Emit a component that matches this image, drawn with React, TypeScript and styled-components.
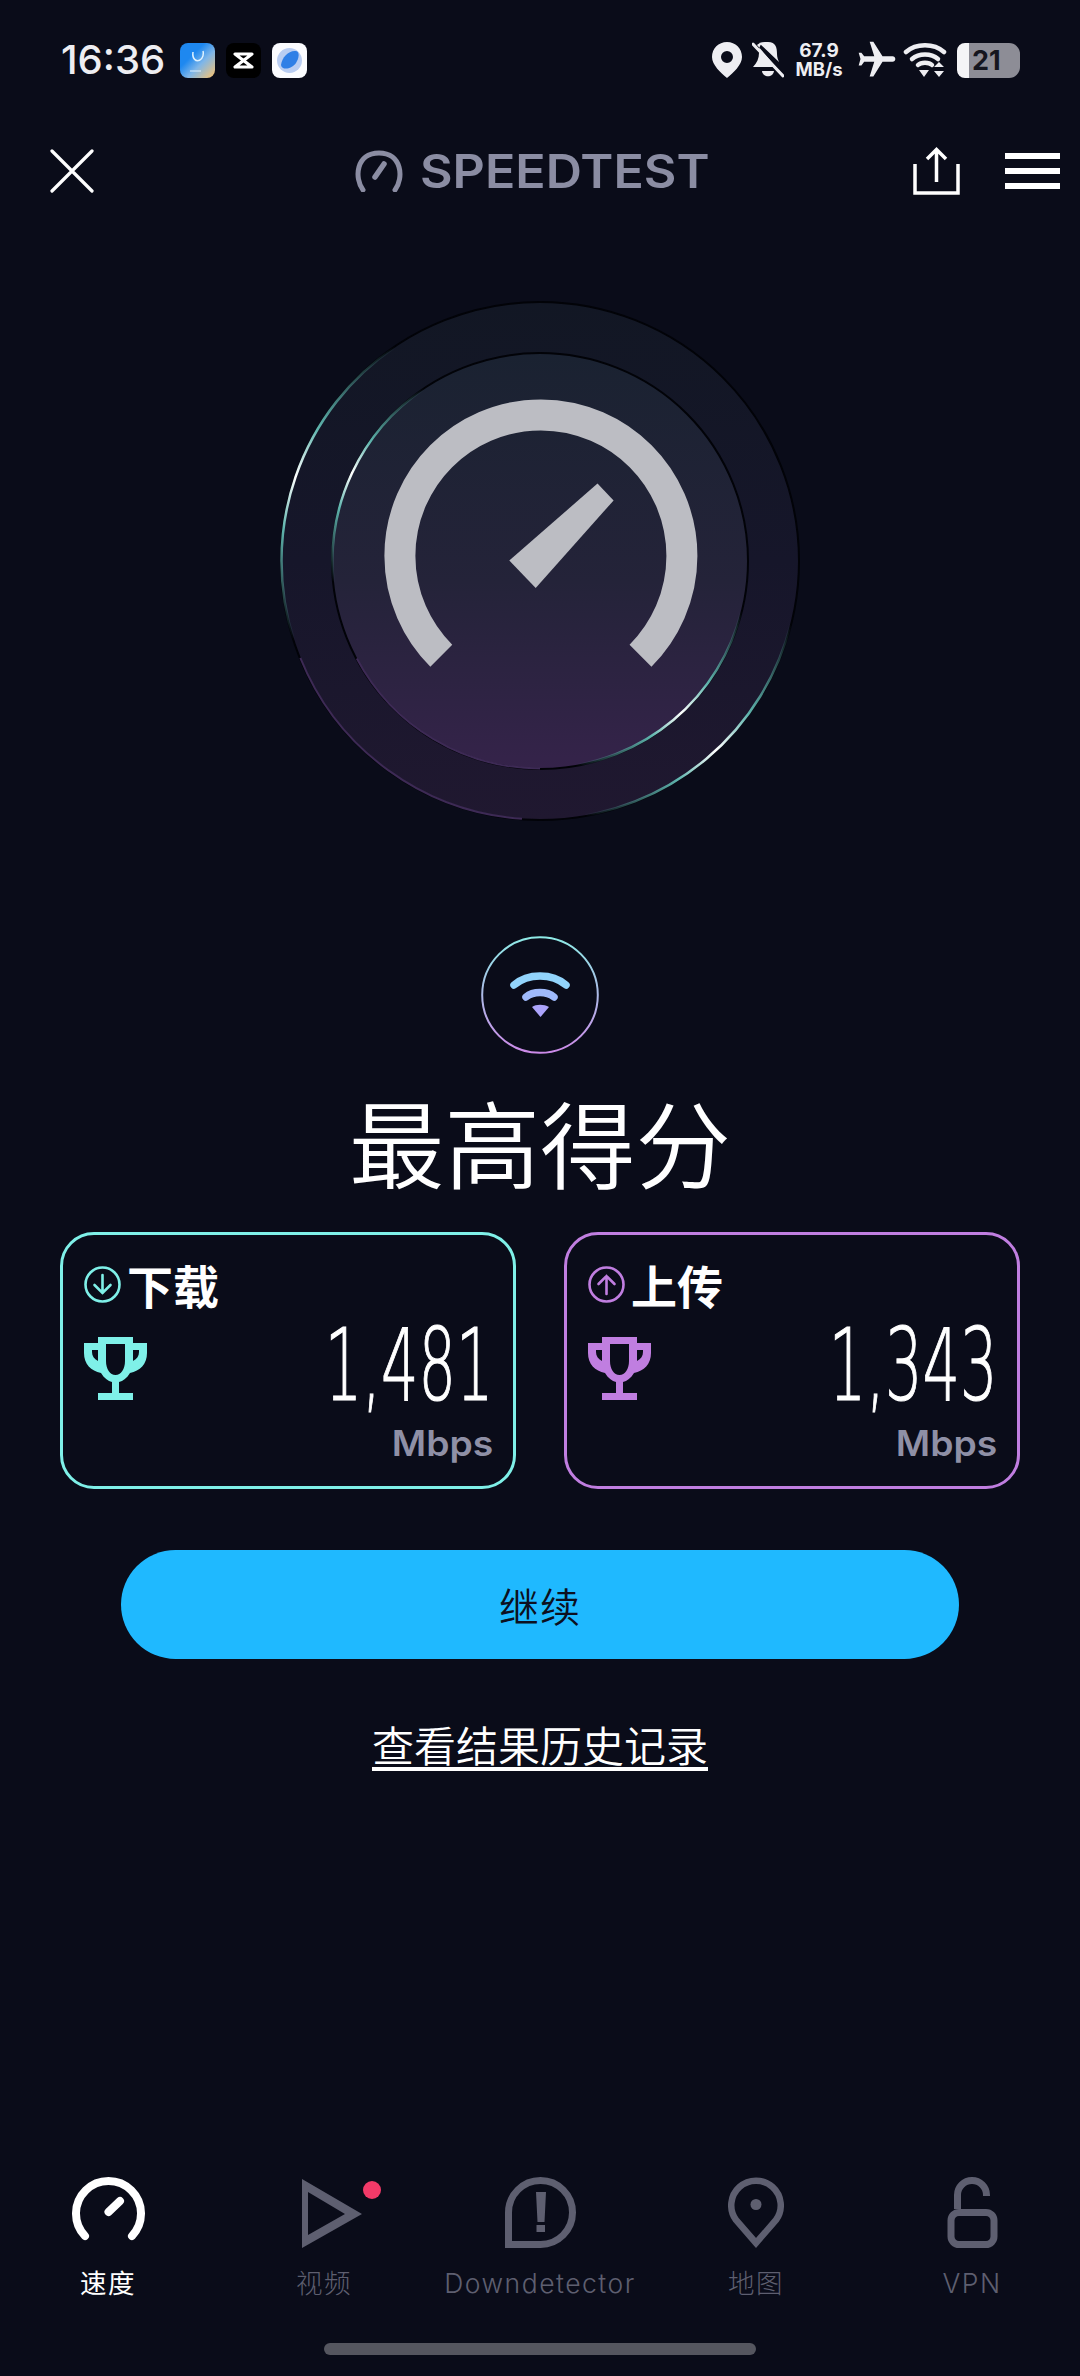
import React from 'react';
import styled, { createGlobalStyle } from 'styled-components';
import { MdFlight } from 'react-icons/md';

const CJK = `'Noto Sans CJK SC', sans-serif`;
const LATIN = `Inter, 'Noto Sans CJK SC', sans-serif`;
const TEAL = '#7ff0e8';
const PURPLE = '#c07ee0';
const MUTED = '#5e5f70';

const GlobalStyle = createGlobalStyle`
  html, body {
    margin: 0;
    padding: 0;
    background: #0a0c19;
  }
`;

const Page = styled.main`
  width: 1080px;
  height: 2376px;
  background: #0a0c19;
  display: flex;
  flex-direction: column;
  overflow: hidden;
  font-family: ${CJK};
  color: #fff;
`;

const StatusBar = styled.div`
  display: flex;
  align-items: center;
  height: 36px;
  margin-top: 42px;
  padding: 0 60px 0 61px;
`;

const Clock = styled.span`
  font-family: ${LATIN};
  font-size: 40px;
  font-weight: 500;
  line-height: 36px;
  color: #eeeef2;
  width: 119px;
`;

const AppIcon = styled.div<{ $bg: string }>`
  width: 35px;
  height: 35px;
  border-radius: 8px;
  background: ${(p) => p.$bg};
  margin-right: 11px;
  overflow: hidden;
  svg {
    display: block;
  }
`;

const StatusIcons = styled.div`
  display: flex;
  align-items: center;
  gap: 10px;
  margin-left: auto;
  color: #eeeef2;
`;

const NetSpeed = styled.div`
  display: flex;
  flex-direction: column;
  align-items: center;
  width: 50px;
  margin: 0 3px 0 0;
  font-family: ${LATIN};
  font-weight: 700;
  color: #eeeef2;
  span:first-child {
    font-size: 19px;
    line-height: 18px;
  }
  span:last-child {
    font-size: 18.5px;
    line-height: 18px;
  }
`;

const FlightIcon = styled(MdFlight)`
  transform: rotate(90deg);
  margin: 0 -6px 0 -2px;
`;

const Battery = styled.div`
  box-sizing: border-box;
  width: 63px;
  height: 35px;
  border-radius: 8px 11px 11px 8px;
  padding-left: 15px;
  background: linear-gradient(90deg, #f4f4f6 0 12px, #8d8d96 12px);
  color: #15161f;
  font-family: ${LATIN};
  font-size: 27px;
  font-weight: 700;
  line-height: 35px;
`;

const Header = styled.header`
  display: flex;
  align-items: center;
  height: 48px;
  margin-top: 69px;
  padding: 0 20px 0 50px;
`;

const Logo = styled.div`
  display: flex;
  align-items: center;
  gap: 17px;
  margin-left: 261px;
`;

const LogoText = styled.span`
  display: inline-block;
  font-family: ${LATIN};
  font-size: 46px;
  font-weight: 600;
  line-height: 48px;
  color: #8b8da3;
  transform: scaleX(1.09);
  transform-origin: left center;
`;

const HeaderActions = styled.div`
  display: flex;
  align-items: center;
  gap: 45px;
  margin-left: auto;
`;

const MenuButton = styled.div`
  width: 55px;
  display: flex;
  flex-direction: column;
  gap: 9px;
  span {
    display: block;
    height: 6px;
    background: #fff;
  }
`;

const Dial = styled.div`
  display: flex;
  justify-content: center;
  margin-top: 85px;
  svg {
    display: block;
  }
`;

const Result = styled.section`
  display: flex;
  flex-direction: column;
  align-items: center;
  margin-top: 96px;
`;

const Title = styled.h1`
  margin: 35px 0 0;
  font-family: ${CJK};
  font-size: 95.5px;
  font-weight: 350;
  line-height: 104px;
`;

const Cards = styled.div`
  display: flex;
  gap: 48px;
  margin-top: 39px;
`;

const Card = styled.div<{ $accent: string }>`
  box-sizing: border-box;
  width: 456px;
  height: 257px;
  padding: 26px 20px 0 21px;
  border: 3px solid ${(p) => p.$accent};
  border-radius: 34px;
  color: ${(p) => p.$accent};
`;

const CardHead = styled.div`
  display: flex;
  align-items: center;
  gap: 6px;
  height: 46px;
`;

const CardLabel = styled.span`
  font-size: 46px;
  font-weight: 700;
  line-height: 46px;
  color: #fff;
`;

const CardBody = styled.div`
  display: flex;
  justify-content: space-between;
  margin-top: 20px;
`;

const TrophyIcon = styled.svg`
  margin-top: 10px;
  display: block;
`;

const ValueColumn = styled.div`
  display: flex;
  flex-direction: column;
  align-items: flex-end;
`;

const Value = styled.span`
  display: inline-block;
  font-family: 'DejaVu Sans', sans-serif;
  font-size: 99px;
  font-weight: 200;
  line-height: 78px;
  color: #fff;
  -webkit-text-stroke: 1.2px #fff;
  transform: scaleX(0.595);
  transform-origin: right center;
`;

const Unit = styled.span`
  display: inline-block;
  font-family: ${LATIN};
  font-size: 35px;
  font-weight: 600;
  line-height: 40px;
  margin-top: 18px;
  color: #8f90a6;
  transform: scaleX(1.065);
  transform-origin: right center;
`;

const ContinueButton = styled.button`
  display: block;
  width: 838px;
  height: 109px;
  margin: 61px auto 0;
  border: 0;
  border-radius: 55px;
  background: #1fb9ff;
  color: #0c1020;
  font-family: ${CJK};
  font-size: 40px;
  font-weight: 350;
  letter-spacing: 1px;
`;

const HistoryLink = styled.a`
  align-self: center;
  margin-top: 58px;
  font-size: 42px;
  font-weight: 350;
  line-height: 54px;
  color: #fff;
  text-decoration: underline;
  text-underline-offset: 5px;
`;

const TabBar = styled.nav`
  display: grid;
  grid-template-columns: repeat(5, 216px);
  margin-top: auto;
`;

const Tab = styled.div<{ $active?: boolean }>`
  display: flex;
  flex-direction: column;
  align-items: center;
  color: ${(p) => (p.$active ? '#fff' : MUTED)};
  font-family: ${LATIN};
  font-size: 26.5px;
  letter-spacing: 1.5px;
  font-weight: ${(p) => (p.$active ? 400 : 300)};
`;

const TabIcon = styled.div<{ $shift?: number }>`
  position: relative;
  height: 72px;
  margin-bottom: 16px;
  padding-left: ${(p) => p.$shift || 0}px;
  svg {
    display: block;
  }
`;

const Badge = styled.span`
  position: absolute;
  top: 4px;
  right: -19px;
  width: 18px;
  height: 18px;
  border-radius: 50%;
  background: #f23a68;
`;

const TabLabel = styled.span`
  line-height: 36px;
  white-space: nowrap;
`;

const HomeBar = styled.div`
  width: 432px;
  height: 12px;
  margin: 42px auto 21px;
  border-radius: 6px;
  background: #55565f;
`;

// point on a circle, angle in degrees clockwise from 12 o'clock
const polar = (r: number, deg: number, cx = 280, cy = 281) => {
  const a = (deg * Math.PI) / 180;
  return { x: cx + r * Math.sin(a), y: cy - r * Math.cos(a) };
};

const arc = (r: number, from: number, to: number) => {
  const a = polar(r, from);
  const b = polar(r, to);
  return `M${a.x} ${a.y}A${r} ${r} 0 ${to - from > 180 ? 1 : 0} 1 ${b.x} ${b.y}`;
};

const RimGradient: React.FC<{ id: string; r: number; from: number; to: number }> = ({ id, r, from, to }) => {
  const a = polar(r, from);
  const b = polar(r, to);
  const color = '#5fb5ae';
  return (
    <linearGradient id={id} gradientUnits="userSpaceOnUse" x1={a.x} y1={a.y} x2={b.x} y2={b.y}>
      <stop offset="0" stopColor={color} stopOpacity="0" />
      <stop offset="0.33" stopColor={color} />
      <stop offset="0.5" stopColor="#ffffff" />
      <stop offset="0.67" stopColor={color} />
      <stop offset="1" stopColor={color} stopOpacity="0" />
    </linearGradient>
  );
};

const SpeedDial = () => (
  <svg width="560" height="560" viewBox="0 0 560 560">
    <defs>
      <linearGradient id="ringFill" x1="0" y1="0" x2="0" y2="1">
        <stop offset="0" stopColor="#121724" />
        <stop offset="0.5" stopColor="#16162a" />
        <stop offset="1" stopColor="#201830" />
      </linearGradient>
      <linearGradient id="faceFill" x1="0" y1="0" x2="0" y2="1">
        <stop offset="0" stopColor="#1a2231" />
        <stop offset="0.55" stopColor="#242339" />
        <stop offset="1" stopColor="#35234a" />
      </linearGradient>
      <RimGradient id="outerA" r={258} from={252} to={326} />
      <RimGradient id="outerB" r={258} from={104} to={170} />
      <RimGradient id="innerA" r={207} from={264} to={326} />
      <RimGradient id="innerB" r={207} from={104} to={170} />
    </defs>
    <circle cx="280" cy="281" r="259" fill="url(#ringFill)" stroke="#020308" strokeWidth="2" />
    <circle cx="280" cy="281" r="208" fill="url(#faceFill)" stroke="#020308" strokeWidth="2" />
    <path d={arc(258.5, 184, 248)} fill="none" stroke="#3d2a55" strokeWidth="2" />
    <path d={arc(207.5, 180, 242)} fill="none" stroke="#3d2a55" strokeWidth="2" />
    <path d={arc(258.5, 252, 326)} fill="none" stroke="url(#outerA)" strokeWidth="2.5" />
    <path d={arc(258.5, 104, 176)} fill="none" stroke="url(#outerB)" strokeWidth="2.5" />
    <path d={arc(207.5, 264, 326)} fill="none" stroke="url(#innerA)" strokeWidth="2.5" />
    <path d={arc(207.5, 104, 176)} fill="none" stroke="url(#innerB)" strokeWidth="2.5" />
    <path d="M181.3 375.7A141 141 0 1 1 380.5 375.7" fill="none" stroke="#bcbdc3" strokeWidth="31" />
    <polygon points="337.5,203.6 353.6,220.4 275.7,307.9 249.3,280.4" fill="#bcbdc3" />
  </svg>
);

const WifiBadge = () => (
  <svg width="118" height="118" viewBox="0 0 118 118">
    <defs>
      <linearGradient id="badgeRing" x1="0" y1="0" x2="0" y2="1">
        <stop offset="0" stopColor="#8eeae6" />
        <stop offset="1" stopColor="#cc8ae8" />
      </linearGradient>
    </defs>
    <circle cx="59" cy="59" r="57.8" fill="none" stroke="url(#badgeRing)" strokeWidth="2" />
    <g fill="none" strokeWidth="7.5" strokeLinecap="round">
      <path d="M33 49C47 37 71 37 85 49" stroke="#92d4fb" />
      <path d="M45 61C52 55 66 55 73 61" stroke="#9fbafb" />
    </g>
    <path d="M51 71C55 68 63 68 68 71L59.500 81Z" fill="#aca4fb" />
  </svg>
);

const Trophy = () => (
  <TrophyIcon width="63" height="63" viewBox="0 0 63 63">
    <path
      fill="currentColor"
      fillRule="evenodd"
      d="M14 0H49V6H63V16C63 27 56 34 46 36C43 41 39 44 35 45V56H49V63H14V56H28V45C24 44 20 41 17 36C7 34 0 27 0 16V6H14ZM22 7V24C22 32 26 38 31.500 38C37 38 41 32 41 24V7ZM8 13V15C8 19 10 22 14 24V13ZM55 13H49V24C53 22 55 19 55 15Z"
    />
  </TrophyIcon>
);

const ArrowBadge: React.FC<{ up?: boolean }> = ({ up }) => (
  <svg width="37" height="37" viewBox="0 0 37 37" fill="none" stroke="currentColor" strokeWidth="2.6">
    <circle cx="18.500" cy="18.500" r="17" />
    <g transform={up ? 'rotate(180 18.500 18.500)' : undefined} strokeLinecap="round">
      <path d="M18.500 9V27M10.500 19L18.500 27L26.500 19" />
    </g>
  </svg>
);

const PinStatus = () => (
  <svg width="30" height="36" viewBox="0 0 30 36">
    <path
      fill="#eeeef2"
      fillRule="evenodd"
      d="M15 0C23.500 0 30 6.500 30 15C30 23 21 31 15 36C9 31 0 23 0 15C0 6.500 6.500 0 15 0ZM15 9A6 6 0 1 0 15 21A6 6 0 1 0 15 9Z"
    />
  </svg>
);

const BellStatus = () => (
  <svg width="32" height="36" viewBox="0 0 32 36">
    <path fill="#eeeef2" d="M16 0C8 0 7 5 7 11C7 16 5 21 1 25H24L5 3C7 1 11 0 16 0Z" />
    <path fill="#eeeef2" d="M16 0C24 0 25 6 25 12C25 15 26 18 27 20L7 1C9 0.500 12 0 16 0Z" />
    <path fill="#eeeef2" d="M10 29H22C21 36 11 36 10 29Z" />
    <path stroke="#eeeef2" strokeWidth="3" strokeLinecap="round" d="M1 2L31 34" />
  </svg>
);

const WifiStatus = () => (
  <svg width="44" height="36" viewBox="0 0 44 36" fill="none" stroke="#eeeef2" strokeWidth="4.500" strokeLinecap="round">
    <path d="M3 10C13 1 31 1 41 10" />
    <path d="M9 17C16 11 28 11 35 17" />
    <path d="M15 23C18 20 26 20 29 23" />
    <path d="M16 28H26L21 35Z M31 25L36 20L41 25Z M31 29H41L36 35Z" fill="#eeeef2" stroke="none" />
  </svg>
);

const App: React.FC = () => {
  return (
    <Page>
      <GlobalStyle />
      <StatusBar>
        <Clock>16:36</Clock>
        <AppIcon $bg="linear-gradient(135deg, #1e88f0 35%, #7fb6e8 60%, #ffc46b 100%)">
          <svg width="35" height="35" viewBox="0 0 35 35" fill="none" stroke="#dff2ff" strokeWidth="1.500">
            <path d="M13 9C12 16 16 19 20 17C23 15 24 11 23 8" />
            <path d="M10 28H21" strokeWidth="1.200" />
          </svg>
        </AppIcon>
        <AppIcon $bg="#000">
          <svg width="35" height="35" viewBox="0 0 35 35" fill="none" stroke="#fff" strokeWidth="3.200">
            <path d="M9 11H26L9 24H26Z" strokeLinejoin="round" />
          </svg>
        </AppIcon>
        <AppIcon $bg="#fbfcff">
          <svg width="35" height="35" viewBox="0 0 35 35">
            <circle cx="17.500" cy="17.500" r="12.500" fill="#b9cdf2" />
            <path d="M9 22C10 14 17 7 24 8C28 9 27 15 24 20C20 26 10 28 9 22Z" fill="#2f7fe6" />
          </svg>
        </AppIcon>
        <StatusIcons>
          <PinStatus />
          <BellStatus />
          <NetSpeed>
            <span>67.9</span>
            <span>MB/s</span>
          </NetSpeed>
          <FlightIcon size={44} />
          <WifiStatus />
          <Battery>21</Battery>
        </StatusIcons>
      </StatusBar>

      <Header>
        <svg width="44" height="44" viewBox="0 0 44 44" stroke="#fff" strokeWidth="3.200" strokeLinecap="round">
          <path d="M2 2L42 42M42 2L2 42" />
        </svg>
        <Logo>
          <svg width="48" height="42" viewBox="0 0 48 42" fill="none" stroke="#8b8da3" strokeWidth="5">
            <path d="M8 40C-1 28 1 3 24 3C47 3 49 28 40 40" strokeLinecap="round" />
            <path d="M20 27L29 14" strokeWidth="5.500" strokeLinecap="round" />
          </svg>
          <LogoText>SPEEDTEST</LogoText>
        </Logo>
        <HeaderActions>
          <svg width="47" height="48" viewBox="0 0 47 48" fill="none" stroke="#fff" strokeWidth="3.500">
            <path d="M2 17V46H45V17" />
            <path d="M23.500 35V3M14 12L23.500 2.500L33 12" />
          </svg>
          <MenuButton>
            <span />
            <span />
            <span />
          </MenuButton>
        </HeaderActions>
      </Header>

      <Dial>
        <SpeedDial />
      </Dial>

      <Result>
        <WifiBadge />
        <Title>最高得分</Title>
        <Cards>
          <Card $accent={TEAL}>
            <CardHead>
              <ArrowBadge />
              <CardLabel>下载</CardLabel>
            </CardHead>
            <CardBody>
              <Trophy />
              <ValueColumn>
                <Value>1,481</Value>
                <Unit>Mbps</Unit>
              </ValueColumn>
            </CardBody>
          </Card>
          <Card $accent={PURPLE}>
            <CardHead>
              <ArrowBadge up />
              <CardLabel>上传</CardLabel>
            </CardHead>
            <CardBody>
              <Trophy />
              <ValueColumn>
                <Value>1,343</Value>
                <Unit>Mbps</Unit>
              </ValueColumn>
            </CardBody>
          </Card>
        </Cards>
      </Result>

      <ContinueButton>继续</ContinueButton>
      <HistoryLink>查看结果历史记录</HistoryLink>

      <TabBar>
        <Tab $active>
          <TabIcon>
            <svg width="73" height="72" viewBox="0 0 73 72" fill="none" stroke="#fff" strokeWidth="8" strokeLinecap="round">
              <path d="M13 59A32.500 32.500 0 1 1 60 59" />
              <path d="M36.500 35L48 24" />
            </svg>
          </TabIcon>
          <TabLabel>速度</TabLabel>
        </Tab>
        <Tab>
          <TabIcon $shift={14}>
            <svg width="62" height="72" viewBox="0 0 62 72">
              <path fillRule="evenodd" fill={MUTED} d="M2 2L62 37L2 71ZM8 15V58L45 37Z" />
            </svg>
            <Badge />
          </TabIcon>
          <TabLabel>视频</TabLabel>
        </Tab>
        <Tab>
          <TabIcon>
            <svg width="71" height="72" viewBox="0 0 71 72" fill="none" stroke={MUTED} strokeWidth="7">
              <path d="M3.500 67.500V35.500A32 32 0 1 1 35.500 67.500Z" />
              <path d="M31 15H41L39.500 45H32.500ZM31.500 48H40V55H31.500Z" fill={MUTED} stroke="none" />
            </svg>
          </TabIcon>
          <TabLabel>Downdetector</TabLabel>
        </Tab>
        <Tab>
          <TabIcon>
            <svg width="56" height="72" viewBox="0 0 56 72" fill="none" stroke={MUTED} strokeWidth="6.500">
              <path d="M28 66L8 43A24.750 24.750 0 1 1 48 43Z" />
              <circle cx="28" cy="27.500" r="5.500" fill={MUTED} stroke="none" />
            </svg>
          </TabIcon>
          <TabLabel>地图</TabLabel>
        </Tab>
        <Tab>
          <TabIcon>
            <svg width="52" height="72" viewBox="0 0 52 72" fill="none" stroke={MUTED} strokeWidth="7">
              <rect x="5" y="35.500" width="43" height="32" rx="8" />
              <path d="M11.500 32V18A14.500 14.500 0 0 1 40.500 18V19" />
            </svg>
          </TabIcon>
          <TabLabel>VPN</TabLabel>
        </Tab>
      </TabBar>
      <HomeBar />
    </Page>
  );
};

export default App;
